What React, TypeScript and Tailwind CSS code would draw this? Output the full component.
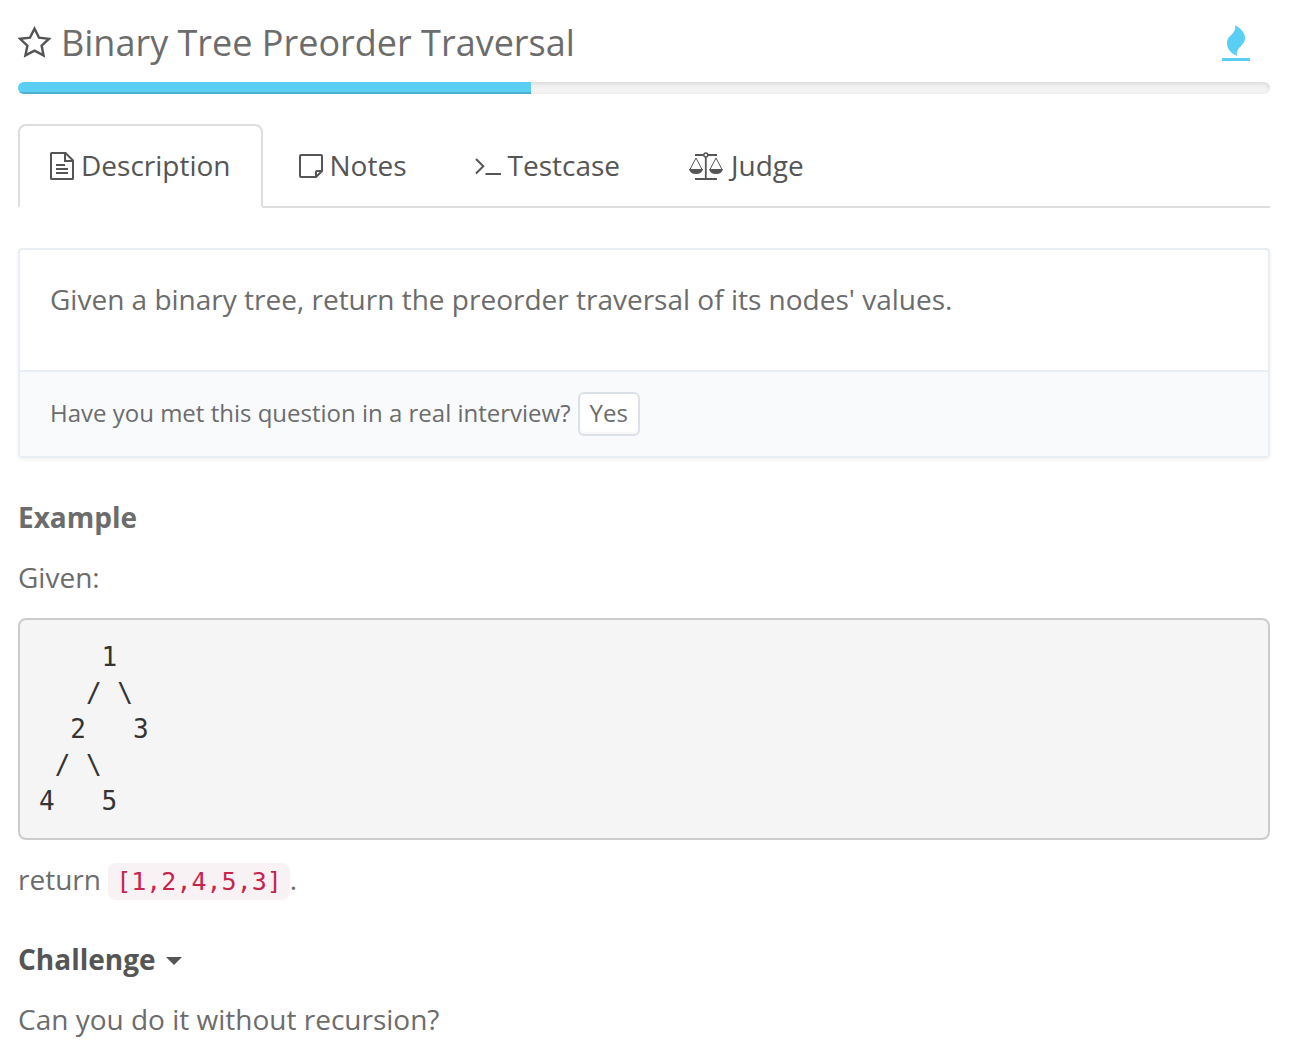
import React, { useState } from 'react';

function StarIcon() {
  return (
    <svg width="34" height="34" viewBox="0 0 34 34" fill="none" stroke="currentColor" strokeWidth="2.4" strokeLinejoin="miter">
      <path d="M16.5 2.6 L21 11.6 L31 12.8 L23.6 19.6 L25.6 29.4 L16.5 24.6 L7.4 29.4 L9.4 19.6 L2 12.8 L12 11.6 Z" />
    </svg>
  );
}

function FlameIcon() {
  return (
    <svg width="28" height="38" viewBox="0 0 28 38" fill="currentColor">
      <path d="M13 1 C18 4 23 8 23 14 C23 22 13.5 23 15 32 C10 29.5 5 26 5 19 C5 11 15 10 13 1 Z" />
      <rect x="0" y="34" width="28" height="3" />
    </svg>
  );
}

function DocumentIcon() {
  return (
    <svg width="24" height="30" viewBox="0 -2 24 30" fill="none" stroke="currentColor" strokeWidth="2">
      <path d="M1.6 1 H15.5 L23 8.5 V26.4 Q23 27 22.4 27 H1.6 Q1 27 1 26.4 V1.6 Q1 1 1.6 1 Z" />
      <path d="M15 1 V9 H23" />
      <path d="M6 13 H15 M6 17 H18 M6 21 H18" />
    </svg>
  );
}

function NoteIcon() {
  return (
    <svg width="24" height="26" viewBox="0 -2 24 26" fill="none" stroke="currentColor" strokeWidth="2">
      <path d="M2 1 H22 Q23 1 23 2 V17 L17 23 H2 Q1 23 1 22 V2 Q1 1 2 1 Z" />
      <path d="M17 23 V18 Q17 17 18 17 H23" />
    </svg>
  );
}

function TerminalIcon() {
  return (
    <svg width="26" height="22" viewBox="0 -2 26 22" fill="none" stroke="currentColor" strokeWidth="2">
      <path d="M1 3 L8.3 10.2 L1 17.5 M10.5 18 H26" />
    </svg>
  );
}

function ScalesIcon() {
  return (
    <svg width="36" height="30" viewBox="-1 -2 36 30" fill="none" stroke="currentColor">
      <path strokeWidth="1.8" d="M6 3 H14.5 M19 3 H28 M16.8 5 V26 M6 27 H28" />
      <circle cx="16.8" cy="3" r="2" strokeWidth="1.5" />
      <path strokeWidth="1" d="M7 6 L1 17.5 M7 6 L13 17.5 M27 6 L21 17.5 M27 6 L33 17.5" />
      <path fill="currentColor" stroke="none" d="M0 17 H14 Q13 22 7 22 Q1 22 0 17 Z M20 17 H34 Q33 22 27 22 Q21 22 20 17 Z" />
    </svg>
  );
}

const tabs = [
  { name: 'Description', icon: <DocumentIcon /> },
  { name: 'Notes', icon: <NoteIcon /> },
  { name: 'Testcase', icon: <TerminalIcon /> },
  { name: 'Judge', icon: <ScalesIcon /> },
];

const tree = `    1
   / \\
  2   3
 / \\
4   5`;

export default function App() {
  const [active, setActive] = useState('Description');
  const [open, setOpen] = useState(true);

  return (
    <main className="min-h-screen bg-white pt-4 pr-5 pb-5 pl-[18px] font-['Open_Sans',sans-serif] text-[28px] leading-[38px] text-[#6c6c6c]">
      <header className="flex items-center justify-between pb-3">
        <div className="flex items-center gap-[9px]">
          <button aria-label="Add to favorites" className="text-[#555]">
            <StarIcon />
          </button>
          <h1 className="text-4xl leading-[54px]">Binary Tree Preorder Traversal</h1>
        </div>
        <a href="#progress" aria-label="Difficulty" className="mr-5 text-[#5bcff3]">
          <FlameIcon />
        </a>
      </header>

      <div id="progress" className="h-3 overflow-hidden rounded-full bg-[#f3f3f3] shadow-[inset_0_2px_4px_rgba(0,0,0,0.1)]">
        <div className="h-full w-[41%] bg-[#5bcff3] shadow-[inset_0_-2px_0_rgba(0,0,0,0.15)]" />
      </div>

      <div role="tablist" className="mt-[30px] flex gap-1 border-b-2 border-[#ddd] text-[#555]">
        {tabs.map((tab) => (
          <button
            key={tab.name}
            role="tab"
            aria-selected={active === tab.name}
            onClick={() => setActive(tab.name)}
            className={
              active === tab.name
                ? '-mb-0.5 flex items-center gap-[7px] rounded-t-lg border-2 border-[#ddd] border-b-white bg-white px-[30px] pt-5 pb-[22px]'
                : '-mb-0.5 flex items-center gap-[7px] border-2 border-transparent px-[30px] pt-5 pb-[22px]'
            }
          >
            {tab.icon}
            {tab.name}
          </button>
        ))}
      </div>

      <section className="mt-10 rounded-sm border-2 border-[#e9eef4] shadow-[0_2px_4px_rgba(0,0,0,0.05)]">
        <p className="px-[30px] pt-[30px] pb-[52px]">
          Given a binary tree, return the preorder traversal of its nodes' values.
        </p>
        <div className="flex items-baseline gap-[7px] border-t-2 border-[#e9eef4] bg-[#f9fafc] px-[30px] py-5 text-2xl leading-[38px]">
          <span>Have you met this question in a real interview?</span>
          <button className="rounded-md border-2 border-[#dce0e7] bg-white px-2.5 pb-0.5 shadow-[inset_0_-2px_2px_rgba(0,0,0,0.04)]">
            Yes
          </button>
        </div>
      </section>

      <h2 className="mt-10 font-bold">Example</h2>
      <p className="mt-[22px]">Given:</p>
      <pre className="mt-[22px] rounded-lg border-2 border-[#ccc] bg-[#f5f5f5] p-[19px] font-['DejaVu_Sans_Mono',monospace] text-[26px] leading-9 text-[#333]">
        {tree}
      </pre>
      <p className="mt-5">
        return{' '}
        <code className="rounded-lg bg-[#f9f2f4] px-2 py-1 font-['DejaVu_Sans_Mono',monospace] text-[25px] leading-none text-[#c7254e]">
          [1,2,4,5,3]
        </code>
        .
      </p>

      <h2 className="mt-[42px] font-bold text-[#555]">
        <button aria-expanded={open} onClick={() => setOpen(!open)} className="flex items-center gap-2.5">
          Challenge
          <svg width="16" height="12" viewBox="0 -4 16 12" fill="currentColor">
            <path d="M0 0 H16 L8 8 Z" />
          </svg>
        </button>
      </h2>
      {open && <p className="mt-[22px]">Can you do it without recursion?</p>}
    </main>
  );
}
